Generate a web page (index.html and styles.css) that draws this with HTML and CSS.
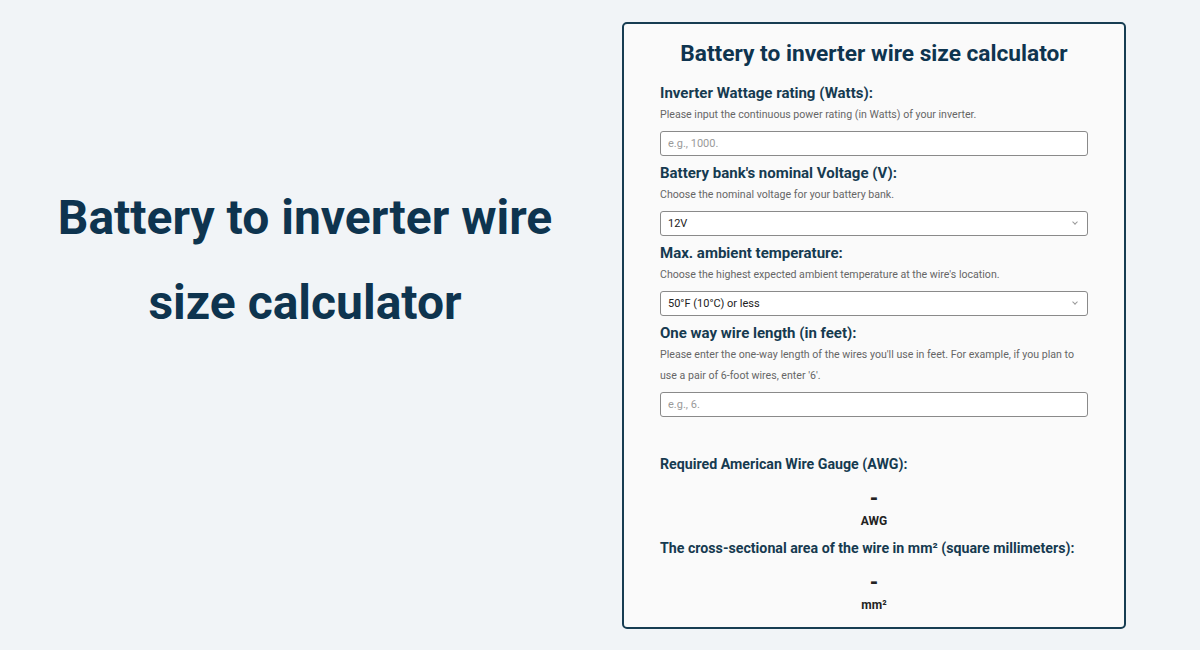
FILE: index.html
```html
<!DOCTYPE html>
<html lang="en">
<head>
    <meta charset="UTF-8">
    <title>Battery to inverter wire size calculator</title>
    <link rel="stylesheet" href="styles.css">
</head>
<body>
    <div class="page">
        <div class="intro">
            <h1>Battery to inverter wire size calculator</h1>
        </div>

        <div class="calc">
            <h2>Battery to inverter wire size calculator</h2>

            <div class="field">
                <label class="field-label" for="watts">Inverter Wattage rating (Watts):</label>
                <p class="field-desc">Please input the continuous power rating (in Watts) of your inverter.</p>
                <input class="field-input" id="watts" type="text" placeholder="e.g., 1000.">
            </div>

            <div class="field">
                <label class="field-label" for="voltage">Battery bank's nominal Voltage (V):</label>
                <p class="field-desc">Choose the nominal voltage for your battery bank.</p>
                <div class="select-wrap">
                    <select class="field-input" id="voltage">
                        <option>12V</option>
                        <option>24V</option>
                        <option>48V</option>
                    </select>
                </div>
            </div>

            <div class="field">
                <label class="field-label" for="temp">Max. ambient temperature:</label>
                <p class="field-desc">Choose the highest expected ambient temperature at the wire's location.</p>
                <div class="select-wrap">
                    <select class="field-input" id="temp">
                        <option>50°F (10°C) or less</option>
                        <option>68°F (20°C)</option>
                        <option>86°F (30°C)</option>
                    </select>
                </div>
            </div>

            <div class="field">
                <label class="field-label" for="length">One way wire length (in feet):</label>
                <p class="field-desc">Please enter the one-way length of the wires you'll use in feet. For example, if you plan to use a pair of 6-foot wires, enter '6'.</p>
                <input class="field-input" id="length" type="text" placeholder="e.g., 6.">
            </div>

            <div class="results">
                <div class="result">
                    <div class="result-label">Required American Wire Gauge (AWG):</div>
                    <div class="result-value" id="awg">-</div>
                    <div class="result-unit">AWG</div>
                </div>
                <div class="result">
                    <div class="result-label">The cross-sectional area of the wire in mm² (square millimeters):</div>
                    <div class="result-value" id="mm2">-</div>
                    <div class="result-unit">mm²</div>
                </div>
            </div>
        </div>
    </div>
</body>
</html>
```

FILE: styles.css
```css
* {
    box-sizing: border-box;
    margin: 0;
    padding: 0;
}
body {
    font-family: Roboto, 'Liberation Sans', Arial, sans-serif;
    color: #333;
    background-color: #f1f4f7;
}
.page {
    display: flex;
    align-items: flex-start;
    height: 650px;
}
.intro {
    width: 610px;
    flex-shrink: 0;
    padding: 175px 40px 0;
    text-align: center;
}
.intro h1 {
    font-size: 48px;
    line-height: 85px;
    font-weight: 700;
    color: #0e344f;
}
.calc {
    width: 504px;
    margin: 22px 0 0 12px;
    padding: 14px 36px 5px;
    background: #fafafa;
    border: 2px solid #173d52;
    border-radius: 5px;
}
.calc h2 {
    font-size: 22.7px;
    line-height: 32px;
    font-weight: 700;
    color: #0e344f;
    text-align: center;
    margin-bottom: 13px;
}
.field {
    margin-bottom: 7px;
}
.field-label {
    display: block;
    font-size: 15px;
    line-height: 20px;
    font-weight: 700;
    color: #163a50;
}
.field-desc {
    font-size: 10.6px;
    line-height: 21px;
    color: #666;
    margin-top: 1px;
    margin-bottom: 6px;
}
.field-input {
    display: block;
    width: 100%;
    height: 25px;
    padding: 0 7px;
    border: 1px solid #8a8a8a;
    border-radius: 3px;
    background: #fff;
    font-family: inherit;
    font-size: 11px;
    color: #222;
    outline: none;
}
.field-input::placeholder {
    color: #9a9a9a;
}
select.field-input {
    appearance: none;
    -webkit-appearance: none;
}
.select-wrap {
    position: relative;
}
/* small chevron on the right of the dropdowns */
.select-wrap::after {
    content: '';
    position: absolute;
    right: 11px;
    top: 9px;
    width: 3px;
    height: 3px;
    border-right: 1px solid #999;
    border-bottom: 1px solid #999;
    transform: rotate(45deg);
    pointer-events: none;
}
.results {
    padding-top: 30px;
}
.result-label {
    font-size: 14.2px;
    line-height: 20px;
    font-weight: 700;
    color: #163a50;
}
.result-value {
    text-align: center;
    font-size: 20px;
    line-height: 28px;
    font-weight: 900;
    color: #222;
    margin-top: 10px;
}
.result-unit {
    text-align: center;
    font-size: 12px;
    line-height: 18px;
    font-weight: 700;
    color: #222;
    margin-bottom: 8px;
}
```
